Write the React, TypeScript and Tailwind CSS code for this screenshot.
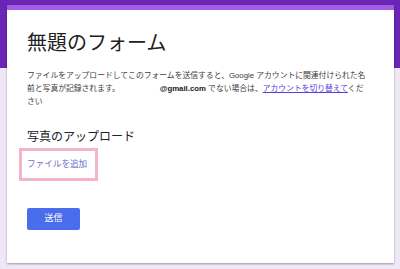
export default function App() {
  return (
    <div
      className="w-[400px] h-[269px] overflow-hidden pt-[5px] pl-[7px] bg-[linear-gradient(#6a25b4_0_68px,#ede7f6_68px)]"
      style={{ fontFamily: '"Liberation Sans", "Noto Sans CJK JP", sans-serif' }}
    >
      <div className="w-[387px] h-[258px] bg-white border-t-[5px] border-[#a35ce6] shadow-[0_1px_2px_rgba(0,0,0,0.35)] pl-[20px] pr-[24px] pt-[21px]">
        <h1 className="text-[20px] leading-[24px] text-[#202124] font-normal">無題のフォーム</h1>

        <p className="mt-[14px] text-[7.8px] leading-[13px] text-[#3c4043]">
          ファイルをアップロードしてこのフォームを送信すると、Google アカウントに関連付けられた名前と写真が記録されます。
          <span className="inline-block w-[40px]"></span>
          <span className="font-bold text-[#202124]">@gmail.com</span> でない場合は、
          <span className="text-[#5b3ed8] underline">アカウントを切り替えて</span>ください
        </p>

        <h2 className="mt-[21px] text-[12px] leading-[16px] text-[#202124]">写真のアップロード</h2>

        <div className="mt-[3px] -ml-[8px] w-[79px] h-[33px] border-[3px] border-[#f4b3cd] flex items-center pl-[5px]">
          <span className="text-[8.6px] text-[#6d72cc]">ファイルを追加</span>
        </div>

        <button className="mt-[27px] w-[53px] h-[22px] rounded-[2px] bg-[#4a6ded] text-white text-[9px] flex items-center justify-center">
          送信
        </button>
      </div>
    </div>
  );
}
